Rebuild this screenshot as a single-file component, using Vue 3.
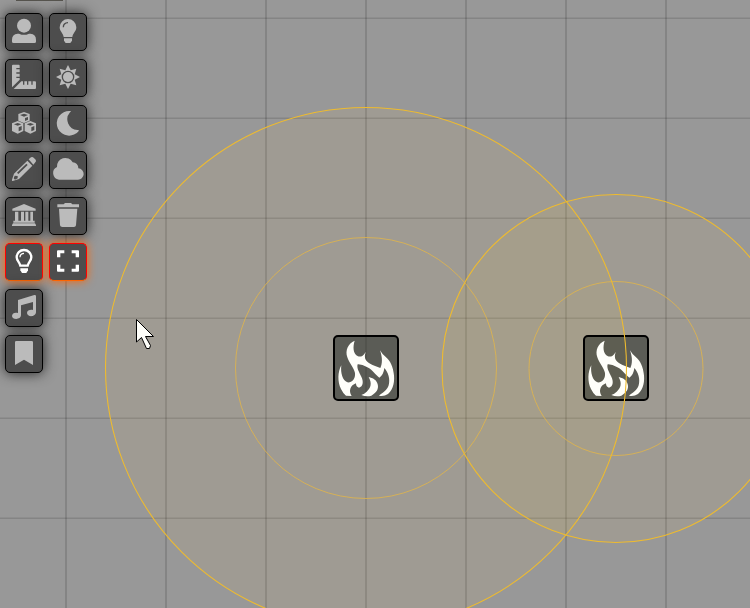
<script setup>
const ICONS = {
  user: '<circle cx="57" cy="38" r="21"/><path d="M21 86V80Q21 63 38 62H42Q57 69 72 62H76Q93 63 93 80V86Q93 90 88 90H26Q21 90 21 86Z"/>',
  bulb: '<path fill-rule="evenodd" d="M57 18A25 25 0 0 1 82 43C82 55 72 60 70 72H44C42 60 32 55 32 43A25 25 0 0 1 57 18ZM57 27Q41 28 41 43H45Q45 32 57 31Z"/><path d="M45 76H69V83L64 90H50L45 83Z"/>',
  ruler: '<path d="M21 20Q21 17 24 17H41Q44 17 44 20V27H34V31H44V40H34V44H44V53H34V57H44V62L21 85ZM26 90L49 67H54V77H58V67H66V77H70V67H79V77H83V67H90Q93 67 93 70V87Q93 90 90 90Z"/>',
  sun: '<path fill-rule="evenodd" d="M57 18L65 34L82 29L77 46L93 54L77 62L82 79L65 74L57 90L49 74L32 79L37 62L21 54L37 46L32 29L49 34ZM57 35A19 19 0 1 0 57 73A19 19 0 1 0 57 35Z"/><circle cx="57" cy="54" r="15"/>',
  cubes: '<path fill-rule="evenodd" d="M57 21L74 27V47L57 54L40 47V27ZM57 26L45 30L57 35L69 30ZM60 39V48L69 44V36ZM38 48L55 55V78L38 86L21 78V55ZM38 54L27 58L38 62L49 58ZM41 67V79L50 75V63ZM76 48L93 55V78L76 86L59 78V55ZM76 54L65 58L76 62L87 58ZM79 67V79L88 75V63Z"/>',
  moon: '<path d="M63 18A37 37 0 1 0 90 77Q89 74 85 75A32 32 0 0 1 63 22Q69 19 63 18Z"/>',
  pencil: '<path fill-rule="evenodd" d="M71 25L78 19Q82 16 86 20L92 26Q95 30 91 34L85 41ZM67 29L82 44L42 84L23 90Q20 90 21 86L27 68ZM64 38L36 65L40 69L68 42ZM29 74L26 82L30 86L38 82V75Z"/>',
  cloud: '<path d="M30 86A20 20 0 0 1 24 48A25 25 0 0 1 71 34A17 17 0 0 1 88 52A17 17 0 0 1 86 86Z"/>',
  bank: '<path d="M57 21L92 35V41H22V35ZM30 44H40V71H48V44H57V71H61V44H70V71H76V44H84V71H89V77H25V71H30ZM24 79H90L93 84V87H21V84Z"/>',
  trash: '<path d="M25 22H44L48 18H66L70 22H90V31H25ZM30 35H85L81 85Q80 90 75 90H40Q34 90 33 85Z"/>',
  bulbOutline: '<path fill="none" stroke="currentColor" stroke-width="7" d="M46 68C44 57 35 53 35 43A22 22 0 0 1 79 43C79 53 70 57 68 68Z"/><path d="M46 76H69V82L64 90H51L46 82Z"/><path fill="none" stroke="currentColor" stroke-width="4" d="M45 43Q45 32 57 31"/>',
  expand: '<path d="M24 43V25Q24 22 27 22H46V31H34V43ZM68 22H87Q90 22 90 25V43H80V31H68ZM24 65H34V77H46V86H27Q24 86 24 83ZM80 65H90V83Q90 86 87 86H68V77H80Z"/>',
  music: '<path d="M39 33L88 18Q93 17 93 22V69C93 85 66 85 66 72C66 64 76 61 84 63V39L48 49V79C48 93 21 93 21 81C21 72 31 69 39 72Z"/>',
  bookmark: '<path d="M30 21Q30 18 34 18H80Q84 18 84 21V90L57 74L30 90Z"/>',
}

const rows = [
  ['user', 'bulb'],
  ['ruler', 'sun'],
  ['cubes', 'moon'],
  ['pencil', 'cloud'],
  ['bank', 'trash'],
  ['bulbOutline', 'expand'],
  ['music'],
  ['bookmark'],
]
const active = ['bulbOutline', 'expand']

const columns = [66, 166, 266, 366, 466, 566, 666]
const lines = [18, 118, 218, 318, 418, 518]
const lights = [
  { x: 616, y: 368.5, dim: 174, bright: 87 },
  { x: 366, y: 368, dim: 260.5, bright: 130.5 },
]
</script>

<template>
  <main class="scene">
    <svg class="board" viewBox="0 0 750 608">
      <defs>
        <clipPath id="small-light"><circle cx="616" cy="368.5" r="174" /></clipPath>
        <g id="flame">
          <rect x="1" y="1" width="64" height="64" rx="4" fill="#181e1a" fill-opacity=".5" stroke="#000" stroke-width="2" />
          <path transform="translate(-13 -13) scale(.33333)" fill="#fffffa" d="M104 56C84 65 75 84 82 106C86 120 102 138 105 153C107 172 94 183 82 181C68 176 61 153 64 130C53 149 52 180 63 201Q69 214 78 221L95 222C85 207 91 190 108 184Q108 195 117 197C130 193 131 178 124 164C119 153 109 139 113 127Q125 126 142 136C158 143 167 160 178 167Q191 158 193 138C205 151 211 171 206 190C202 205 187 213 177 221Q192 224 204 216C221 202 225 175 221 153C217 124 205 112 195 103Q187 97 180 85C188 108 187 125 181 138C166 132 148 128 138 115Q132 106 137 90C129 104 121 105 114 103C99 96 98 74 104 56ZM146 165C157 185 152 198 140 209Q133 216 124 219Q139 225 154 221C169 213 177 201 173 187C170 174 159 168 146 165Z" />
        </g>
      </defs>
      <g class="grid">
        <rect v-for="x in columns" :key="'c' + x" :x="x - 1" y="0" width="2" height="608" />
        <rect v-for="y in lines" :key="'r' + y" x="0" :y="y - .5" width="750" height="1.5" />
      </g>
      <circle v-for="light in lights" :key="'f' + light.x" class="glow" :cx="light.x" :cy="light.y" :r="light.dim" />
      <circle class="overlap" cx="366" cy="368" r="260.5" clip-path="url(#small-light)" />
      <use v-for="light in lights" :key="'i' + light.x" href="#flame" :x="light.x - 33" y="335" />
      <g v-for="light in lights" :key="'l' + light.x">
        <circle class="dim" :cx="light.x" :cy="light.y" :r="light.dim" />
        <circle class="bright" :cx="light.x" :cy="light.y" :r="light.bright" />
      </g>
      <path class="pointer" d="M136.5 319.5V342L141.500 337.500L146.500 348.500H149.500L150.500 345.500L145.500 336.500H153.500Z" />
    </svg>

    <nav class="controls">
      <div class="top-edge"></div>
      <div v-for="(row, i) in rows" :key="i" class="row">
        <button v-for="name in row" :key="name" class="tool" :class="{ active: active.includes(name) }">
          <svg viewBox="0 0 114 114" fill="currentColor" v-html="ICONS[name]"></svg>
        </button>
      </div>
    </nav>
  </main>
</template>

<style>
body { margin: 0; overflow: hidden; }
</style>

<style scoped>
.scene { position: relative; width: 750px; height: 608px; background: #989898; overflow: hidden; }
.board { position: absolute; inset: 0; width: 750px; height: 608px; }
.grid { fill: rgba(0, 0, 0, .13); }
.glow { fill: rgba(222, 184, 108, .1); }
.overlap { fill: rgba(170, 180, 70, .035); }
.dim { fill: none; stroke: #eebb2f; stroke-width: 1.1; }
.bright { fill: none; stroke: #e2b548; stroke-width: 1; stroke-opacity: .8; }
.pointer { fill: #fffffa; stroke: #000; stroke-width: 1; }
.controls { position: relative; display: flex; flex-direction: column; gap: 8px; width: 82px; padding: 0 0 0 5px; }
.top-edge { width: 47px; height: 1px; margin: 0 0 4px 11px; background: #57554f; }
.row { display: flex; gap: 6px; }
.tool { box-sizing: border-box; width: 38px; height: 38px; padding: 0; border: 1px solid #000; border-radius: 5px; background: #4d4d4d; color: #bbb; box-shadow: 0 0 13px #222; }
.tool svg { display: block; width: 38px; height: 38px; margin: -1px; }
.tool.active { border-color: #f00; border-bottom-color: #ff6400; color: #fff; box-shadow: 0 0 10px #ff6400; }
</style>
